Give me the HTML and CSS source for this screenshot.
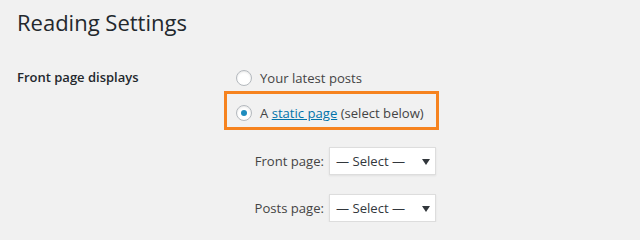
FILE: index.html
```html
<!DOCTYPE html>
<html lang="en">
<head>
  <meta charset="UTF-8">
  <title>Reading Settings</title>
  <link rel="stylesheet" href="styles.css">
</head>
<body>
  <div class="wrap">
    <h1>Reading Settings</h1>

    <div class="setting">
      <div class="setting-label">Front page displays</div>
      <div class="setting-field">
        <label class="choice">
          <span class="radio"></span>
          <span>Your latest posts</span>
        </label>

        <div class="highlight">
          <label class="choice">
            <span class="radio checked"></span>
            <span>A <a href="#">static page</a> (select below)</span>
          </label>
        </div>

        <div class="page-selects">
          <label class="select-label" for="frontPage">Front page:</label>
          <div class="select-box">
            <select id="frontPage">
              <option>&mdash; Select &mdash;</option>
            </select>
            <svg class="arrow" width="8" height="6" viewBox="0 0 8 6"><path d="M0 0h8L4 6z" fill="#32373c"/></svg>
          </div>

          <label class="select-label" for="postsPage">Posts page:</label>
          <div class="select-box">
            <select id="postsPage">
              <option>&mdash; Select &mdash;</option>
            </select>
            <svg class="arrow" width="8" height="6" viewBox="0 0 8 6"><path d="M0 0h8L4 6z" fill="#32373c"/></svg>
          </div>
        </div>
      </div>
    </div>
  </div>
</body>
</html>
```

FILE: styles.css
```css
body {
  margin: 0;
  background-color: #f1f1f1;
  color: #444;
  font-family: "Open Sans", Arial, sans-serif;
  font-size: 13.1px;
}
.wrap {
  padding: 8px 0 0 17px;
}
h1 {
  margin: 0;
  font-size: 22px;
  font-weight: 400;
  line-height: 29px;
  color: #23282d;
}
.setting {
  display: flex;
  margin-top: 30px;
}
.setting-label {
  width: 219px;
  font-size: 13px;
  font-weight: 600;
  color: #23282d;
  line-height: 20px;
}
.setting-field {
  display: flex;
  flex-direction: column;
  padding-top: 2px;
}
.choice {
  display: flex;
  align-items: center;
  gap: 8px;
  height: 18px;
}
.radio {
  width: 14px;
  height: 14px;
  border: 1px solid #b4b9be;
  border-radius: 50%;
  background: #fff;
  box-shadow: inset 0 1px 2px rgba(0, 0, 0, 0.1);
  display: flex;
  align-items: center;
  justify-content: center;
}
.radio.checked::after {
  content: "";
  width: 6px;
  height: 6px;
  border-radius: 50%;
  background: #1e8cbe;
}
a {
  color: #0073aa;
}
.highlight {
  box-sizing: border-box;
  width: 215px;
  margin: 4px 0 0 -12px;
  padding: 10px 0 5px 9px;
  border: 3px solid #f6831f;
}
.page-selects {
  display: grid;
  grid-template-columns: 88px 107px;
  column-gap: 5px;
  row-gap: 19px;
  align-items: center;
  margin-top: 17px;
}
.select-label {
  text-align: right;
}
.select-box {
  position: relative;
  height: 28px;
}
.select-box select {
  appearance: none;
  box-sizing: border-box;
  width: 100%;
  height: 28px;
  margin: 0;
  padding: 0 0 0 6px;
  border: 1px solid #ddd;
  border-radius: 0;
  background: #fff;
  color: #32373c;
  font-family: inherit;
  font-size: 13.1px;
  box-shadow: 0 1px 2px rgba(0, 0, 0, 0.07);
}
.arrow {
  position: absolute;
  right: 6px;
  top: 12px;
  pointer-events: none;
}
```
